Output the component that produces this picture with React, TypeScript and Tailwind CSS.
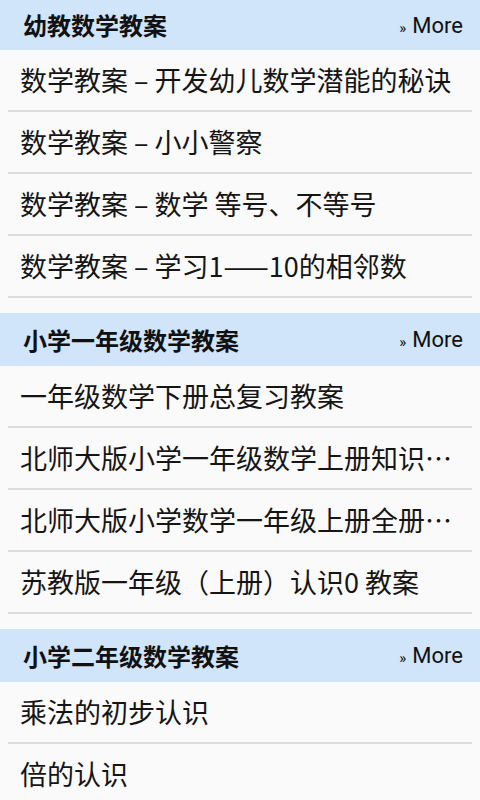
import React from "react";

type Section = {
  title: string;
  items: string[];
};

const SECTIONS: Section[] = [
  {
    title: "幼教数学教案",
    items: [
      "数学教案 – 开发幼儿数学潜能的秘诀",
      "数学教案 – 小小警察",
      "数学教案 – 数学 等号、不等号",
      "数学教案 – 学习1——10的相邻数",
    ],
  },
  {
    title: "小学一年级数学教案",
    items: [
      "一年级数学下册总复习教案",
      "北师大版小学一年级数学上册知识点归纳总结",
      "北师大版小学数学一年级上册全册教案",
      "苏教版一年级（上册）认识0 教案",
    ],
  },
  {
    title: "小学二年级数学教案",
    items: ["乘法的初步认识", "倍的认识", "表内乘法（一）"],
  },
];

function SectionBlock({ section, first }: { section: Section; first: boolean }) {
  return (
    <section className={first ? "" : "mt-[15px]"}>
      {/* Section header — light blue band with "» More" link on the right */}
      <div
        className={`flex items-center justify-between bg-[#d0e4fa] pl-[23px] pr-[17px] ${
          first ? "h-[50px]" : "h-[53px]"
        }`}
      >
        <h2 className="text-[24px] font-bold leading-[1.5] text-[#111]">{section.title}</h2>
        <a className="flex items-baseline gap-[6px] text-[22px] leading-[1.5] text-[#111] [font-family:Roboto,'Noto_Sans',sans-serif]">
          <span className="text-[15px]">»</span>
          <span>More</span>
        </a>
      </div>
      <ul>
        {section.items.map((item) => (
          <li
            key={item}
            className="mx-2 flex h-[62px] items-center border-b-2 border-[#dcdcdc] pl-3 pr-[14px]"
          >
            <span className="block min-w-0 truncate text-[27px] leading-[1.5] text-[#151515]">
              {item}
            </span>
          </li>
        ))}
      </ul>
    </section>
  );
}

export default function App() {
  return (
    <div
      className="h-[800px] w-[480px] overflow-hidden bg-[#fafafa]"
      style={{ fontFamily: "'Noto Sans CJK SC', 'Noto Sans', sans-serif" }}
    >
      {SECTIONS.map((s, i) => (
        <SectionBlock key={s.title} section={s} first={i === 0} />
      ))}
    </div>
  );
}
